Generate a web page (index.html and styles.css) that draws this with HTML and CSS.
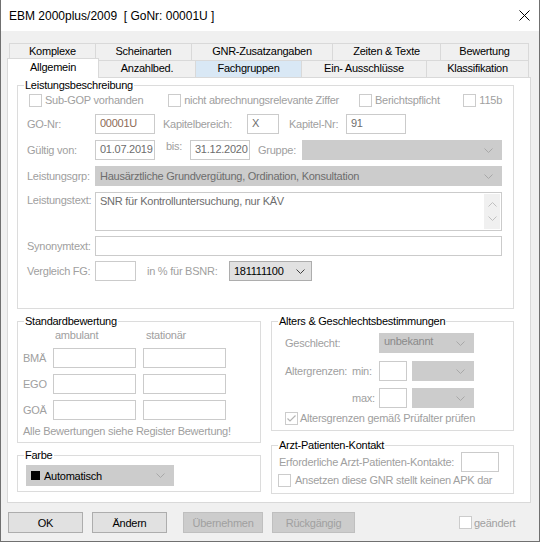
FILE: index.html
```html
<!DOCTYPE html>
<html lang="de">
<head>
    <meta charset="UTF-8">
    <title>EBM 2000plus/2009 - Allgemein</title>
    <link rel="stylesheet" href="styles.css">
</head>
<body>
<div class="window">
    <div class="titlebar">
        <span>EBM 2000plus/2009&nbsp; [ GoNr: 00001U ]</span>
        <svg class="close" width="11" height="11" viewBox="0 0 11 11"><path d="M0.5 0.5L10.5 10.5M10.5 0.5L0.5 10.5" stroke="#000" stroke-width="1" fill="none"/></svg>
    </div>

    <div class="client">
        <!-- Registerkarten -->
        <div class="tabrow row1">
            <div class="tab t-komplexe">Komplexe</div>
            <div class="tab t-schein">Scheinarten</div>
            <div class="tab t-gnr">GNR-Zusatzangaben</div>
            <div class="tab t-zeiten">Zeiten &amp; Texte</div>
            <div class="tab t-bewertung last">Bewertung</div>
        </div>
        <div class="tabrow row2">
            <div class="tab active t-allg">Allgemein</div>
            <div class="tab after t-anzahl">Anzahlbed.</div>
            <div class="tab hover t-fach">Fachgruppen</div>
            <div class="tab t-ein">Ein- Ausschlüsse</div>
            <div class="tab t-klass last">Klassifikation</div>
        </div>

        <div class="panel">
            <fieldset class="grp grp-main">
                <legend>Leistungsbeschreibung</legend>
                <div class="main-body">
                    <div class="checks">
                        <div class="chk c1"><span class="box"></span>Sub-GOP vorhanden</div>
                        <div class="chk c2"><span class="box"></span>nicht abrechnungsrelevante Ziffer</div>
                        <div class="chk c3"><span class="box"></span>Berichtspflicht</div>
                        <div class="chk c4"><span class="box"></span>115b</div>
                    </div>

                    <div class="row mt6">
                        <span class="lbl l-first">GO-Nr:</span>
                        <span class="inp w60 val-go">00001U</span>
                        <span class="lbl l-kb">Kapitelbereich:</span>
                        <span class="inp w32">X</span>
                        <span class="lbl l-kn">Kapitel-Nr:</span>
                        <span class="inp w60">91</span>
                    </div>

                    <div class="row mt6">
                        <span class="lbl l-first">Gültig von:</span>
                        <span class="inp w60">01.07.2019</span>
                        <span class="lbl l-bis">bis:</span>
                        <span class="inp w60">31.12.2020</span>
                        <span class="lbl l-gr">Gruppe:</span>
                        <span class="sel grow">
                            <span></span>
                            <svg class="chev" width="9" height="5" viewBox="0 0 9 5"><path d="M0.5 0.5L4.5 4.5L8.5 0.5"/></svg>
                        </span>
                    </div>

                    <div class="row mt6">
                        <span class="lbl l-first">Leistungsgrp:</span>
                        <span class="sel grow">
                            <span>Hausärztliche Grundvergütung, Ordination, Konsultation</span>
                            <svg class="chev" width="9" height="5" viewBox="0 0 9 5"><path d="M0.5 0.5L4.5 4.5L8.5 0.5"/></svg>
                        </span>
                    </div>

                    <div class="row row-ta mt6">
                        <span class="lbl l-first l-top">Leistungstext:</span>
                        <div class="ta grow">
                            <span class="ta-text">SNR für Kontrolluntersuchung, nur KÄV</span>
                            <div class="ta-scroll">
                                <svg width="9" height="5" viewBox="0 0 9 5"><path d="M0.5 4.5L4.5 0.5L8.5 4.5"/></svg>
                                <svg width="9" height="5" viewBox="0 0 9 5"><path d="M0.5 0.5L4.5 4.5L8.5 0.5"/></svg>
                            </div>
                        </div>
                    </div>

                    <div class="row mt5">
                        <span class="lbl l-first">Synonymtext:</span>
                        <span class="inp grow"></span>
                    </div>

                    <div class="row mt5">
                        <span class="lbl l-first">Vergleich FG:</span>
                        <span class="inp w41"></span>
                        <span class="lbl l-bsnr">in % für BSNR:</span>
                        <span class="sel sel-on w83">
                            <span>181111100</span>
                            <svg class="chev" width="9" height="5" viewBox="0 0 9 5"><path d="M0.5 0.5L4.5 4.5L8.5 0.5"/></svg>
                        </span>
                    </div>
                </div>
            </fieldset>

            <div class="lower">
                <div class="col col-left">
                    <fieldset class="grp">
                        <legend>Standardbewertung</legend>
                        <div class="std-body">
                            <div class="std-grid">
                                <span></span>
                                <span class="colh">ambulant</span>
                                <span class="colh colh-st">stationär</span>
                                <span class="lbl">BMÄ</span>
                                <span class="inp"></span>
                                <span class="inp"></span>
                                <span class="lbl">EGO</span>
                                <span class="inp"></span>
                                <span class="inp"></span>
                                <span class="lbl">GOÄ</span>
                                <span class="inp"></span>
                                <span class="inp"></span>
                            </div>
                            <div class="note">Alle Bewertungen siehe Register Bewertung!</div>
                        </div>
                    </fieldset>

                    <fieldset class="grp grp-farbe">
                        <legend>Farbe</legend>
                        <div class="farbe-body">
                            <span class="sel sel-farbe">
                                <span class="farbe-val"><span class="swatch"></span>Automatisch</span>
                                <svg class="chev" width="9" height="5" viewBox="0 0 9 5"><path d="M0.5 0.5L4.5 4.5L8.5 0.5"/></svg>
                            </span>
                        </div>
                    </fieldset>
                </div>

                <div class="col col-right">
                    <fieldset class="grp">
                        <legend>Alters &amp; Geschlechtsbestimmungen</legend>
                        <div class="alter-body">
                            <div class="row">
                                <span class="lbl l-gesch">Geschlecht:</span>
                                <span class="sel sel-gesch w95">
                                    <span>unbekannt</span>
                                    <svg class="chev" width="9" height="5" viewBox="0 0 9 5"><path d="M0.5 0.5L4.5 4.5L8.5 0.5"/></svg>
                                </span>
                            </div>
                            <div class="row mt8">
                                <span class="lbl l-alt">Altergrenzen:</span>
                                <span class="lbl l-mm">min:</span>
                                <span class="inp w28"></span>
                                <span class="sel sel-age">
                                    <span></span>
                                    <svg class="chev" width="9" height="5" viewBox="0 0 9 5"><path d="M0.5 0.5L4.5 4.5L8.5 0.5"/></svg>
                                </span>
                            </div>
                            <div class="row mt7">
                                <span class="lbl l-alt"></span>
                                <span class="lbl l-mm">max:</span>
                                <span class="inp w28"></span>
                                <span class="sel sel-age">
                                    <span></span>
                                    <svg class="chev" width="9" height="5" viewBox="0 0 9 5"><path d="M0.5 0.5L4.5 4.5L8.5 0.5"/></svg>
                                </span>
                            </div>
                            <div class="chk chk-alt">
                                <span class="box">
                                    <svg width="11" height="11" viewBox="0 0 11 11"><path d="M1.5 5.5L4 8L9.5 2.5" fill="none" stroke="#b4b4b4" stroke-width="1.2"/></svg>
                                </span>
                                Altersgrenzen gemäß Prüfalter prüfen
                            </div>
                        </div>
                    </fieldset>

                    <fieldset class="grp grp-apk">
                        <legend>Arzt-Patienten-Kontakt</legend>
                        <div class="apk-body">
                            <div class="row">
                                <span class="lbl l-apk">Erforderliche Arzt-Patienten-Kontakte:</span>
                                <span class="inp w38"></span>
                            </div>
                            <div class="chk chk-apk"><span class="box"></span>Ansetzen diese GNR stellt keinen APK dar</div>
                        </div>
                    </fieldset>
                </div>
            </div>
        </div>

        <div class="buttons">
            <div class="btn b-ok">OK</div>
            <div class="btn b-aendern">Ändern</div>
            <div class="btn dis b-uebern">Übernehmen</div>
            <div class="btn dis b-rueck">Rückgängig</div>
            <div class="chk chk-geaendert"><span class="box"></span>geändert</div>
        </div>
    </div>
</div>
</body>
</html>
```

FILE: styles.css
```css
* {
    box-sizing: border-box;
}
body {
    margin: 0;
    font-family: "Liberation Sans", Arial, sans-serif;
    font-size: 11px;
    letter-spacing: -0.25px;
    color: #000000;
    background-color: #ffffff;
}
.window {
    width: 540px;
    height: 542px;
    background-color: #f0f0f0;
    border: 1px solid #707070;
    border-top: none;
}
.titlebar {
    height: 31px;
    background-color: #ffffff;
    display: flex;
    align-items: center;
    justify-content: space-between;
    padding: 0 9px 0 8px;
    font-size: 12px;
    letter-spacing: 0;
}
.close {
    display: block;
}
.client {
    padding: 12px 8px 0 6px;
}

/* tabs */
.tabrow {
    display: flex;
    height: 17px;
}
.row1 {
    margin-left: 2px;
}
.tab {
    height: 17px;
    border: 1px solid #d9d9d9;
    border-right: none;
    border-bottom: none;
    background-color: #f0f0f0;
    text-align: center;
    line-height: 15px;
    white-space: nowrap;
}
.tab.last {
    border-right: 1px solid #d9d9d9;
}
.tab.active {
    height: 20px;
    margin-top: -2px;
    background-color: #ffffff;
    border-right: 1px solid #d9d9d9;
    position: relative;
    z-index: 1;
    line-height: 16px;
}
.tab.after {
    border-left: none;
}
.tab.hover {
    background-color: #d9e8f5;
}
.t-komplexe { width: 86px; }
.t-schein { width: 96px; }
.t-gnr { width: 141px; }
.t-zeiten { width: 108px; }
.t-bewertung { width: 89px; }
.t-allg { width: 92px; }
.t-anzahl { width: 96px; }
.t-fach { width: 106px; }
.t-ein { width: 125px; }
.t-klass { width: 103px; }

.panel {
    width: 524px;
    height: 426px;
    background-color: #ffffff;
    border: 1px solid #d9d9d9;
}

/* group boxes */
.grp {
    margin: 0;
    padding: 0;
    border: 1px solid #dcdcdc;
    min-width: 0;
}
.grp legend {
    margin-left: 6px;
    padding: 0 1px;
    line-height: 14px;
}
.grp-main {
    margin: 0 16px 0 9px;
}
.main-body {
    padding: 0 11px 27px 9px;
}

.row {
    display: flex;
    align-items: center;
    height: 20px;
}
.mt5 { margin-top: 5px; }
.mt6 { margin-top: 6px; }
.mt7 { margin-top: 7px; }
.mt8 { margin-top: 8px; }
.grow { flex: 1; }

.lbl {
    color: #a0a0a0;
    white-space: nowrap;
}
.l-first { width: 68px; }
.l-kb { width: 84px; margin-left: 8px; }
.l-kn { width: 57px; margin-left: 10px; }
.l-bis { width: 24px; margin-left: 11px; align-self: flex-start; line-height: 12px; }
.l-gr { width: 44px; margin-left: 8px; }
.l-bsnr { width: 82px; margin-left: 11px; }
.l-top { align-self: flex-start; line-height: 16px; }

.inp {
    height: 20px;
    border: 1px solid #cbcbcb;
    background-color: #ffffff;
    color: #6d6d6d;
    padding: 0 4px;
    line-height: 16px;
    white-space: nowrap;
}
.val-go { color: #8d6b57; }
.w28 { width: 28px; }
.w32 { width: 32px; }
.w38 { width: 38px; }
.w41 { width: 41px; }
.w60 { width: 60px; }
.w83 { width: 83px; }
.w95 { width: 95px; }

.sel {
    height: 20px;
    display: flex;
    align-items: center;
    justify-content: space-between;
    background-color: #cccccc;
    border: 1px solid #cccccc;
    color: #6d6d6d;
    padding: 0 8px 0 4px;
    white-space: nowrap;
}
.chev {
    display: block;
    fill: none;
    stroke: #a8a8a8;
    stroke-width: 1;
}
.sel-on {
    background-color: #e1e1e1;
    border-color: #adadad;
    color: #000000;
    padding-right: 6px;
}
.sel-on .chev {
    stroke: #404040;
}

/* textarea */
.row-ta {
    height: 39px;
    align-items: stretch;
}
.ta {
    display: flex;
    justify-content: space-between;
    border: 1px solid #cbcbcb;
    color: #6d6d6d;
}
.ta-text {
    padding: 1px 4px;
    line-height: 14px;
}
.ta-scroll {
    width: 16px;
    margin: 1px 1px 1px 0;
    background-color: #f0f0f0;
    display: flex;
    flex-direction: column;
    justify-content: space-between;
    align-items: center;
    padding: 8px 0 8px;
}
.ta-scroll svg {
    display: block;
    fill: none;
    stroke: #c0c0c0;
}

/* checkboxes */
.checks {
    display: flex;
    align-items: center;
    height: 16px;
}
.chk {
    display: flex;
    align-items: center;
    color: #a0a0a0;
    white-space: nowrap;
}
.box {
    width: 13px;
    height: 13px;
    border: 1px solid #cccccc;
    background-color: #ffffff;
    margin-right: 3px;
    flex-shrink: 0;
}
.box svg {
    display: block;
}
.c1 { width: 140px; margin-left: 2px; }
.c2 { width: 192px; }
.c3 { width: 105px; }
.c4 { flex: 1; }

/* lower area */
.lower {
    display: flex;
    gap: 10px;
    margin: 5px 16px 0 9px;
}
.col-left {
    width: 244px;
}
.col-right {
    width: 243px;
}
.std-body {
    padding: 0 0 4px 5px;
}
.std-grid {
    display: grid;
    grid-template-columns: 23px 83px 83px;
    grid-template-rows: 14px 20px 20px 20px;
    column-gap: 7px;
    row-gap: 6px;
    align-items: center;
}
.std-grid .lbl {
    margin-right: -7px;
}
.colh {
    color: #a0a0a0;
    padding-left: 2px;
}
.colh-st {
    padding-left: 3px;
}
.note {
    margin-top: 4px;
    line-height: 14px;
    color: #a0a0a0;
}
.grp-farbe {
    margin-top: 5px;
}
.farbe-body {
    padding: 3px 0 5px 8px;
}
.sel-farbe {
    width: 148px;
    height: 21px;
    color: #000000;
    padding-right: 8px;
}
.farbe-val {
    display: flex;
    align-items: center;
}
.swatch {
    width: 9px;
    height: 9px;
    background-color: #000000;
    margin-right: 4px;
}

.alter-body {
    padding: 5px 0 5px 13px;
}
.l-gesch { width: 94px; }
.sel-gesch {
    color: #8a8a8a;
    align-items: flex-start;
    line-height: 15px;
}
.sel-gesch .chev {
    align-self: center;
}
.l-alt { width: 67px; }
.l-mm { width: 27px; }
.sel-age {
    width: 62px;
    margin-left: 5px;
}
.chk-alt {
    margin-top: 3px;
    height: 14px;
}
.chk-alt .box {
    margin-right: 2px;
    border-color: #cccccc;
}
.grp-apk {
    margin-top: 7px;
}
.apk-body {
    padding: 0 0 6px 6px;
}
.l-apk {
    width: 183px;
    padding-left: 1px;
}
.chk-apk {
    margin-top: 1px;
    height: 14px;
}
.chk-apk .box {
    margin-right: 4px;
}

/* buttons */
.buttons {
    display: flex;
    align-items: center;
    margin-top: 9px;
    padding-left: 1px;
}
.btn {
    height: 21px;
    border: 1px solid #adadad;
    background-color: #e1e1e1;
    display: flex;
    align-items: center;
    justify-content: center;
}
.btn.dis {
    background-color: #cccccc;
    border-color: #bfbfbf;
    color: #a0a0a0;
}
.b-ok { width: 75px; }
.b-aendern { width: 75px; margin-left: 9px; }
.b-uebern { width: 80px; margin-left: 16px; }
.b-rueck { width: 83px; margin-left: 9px; }
.chk-geaendert {
    margin-left: 104px;
}
.chk-geaendert .box {
    margin-right: 2px;
}
```
